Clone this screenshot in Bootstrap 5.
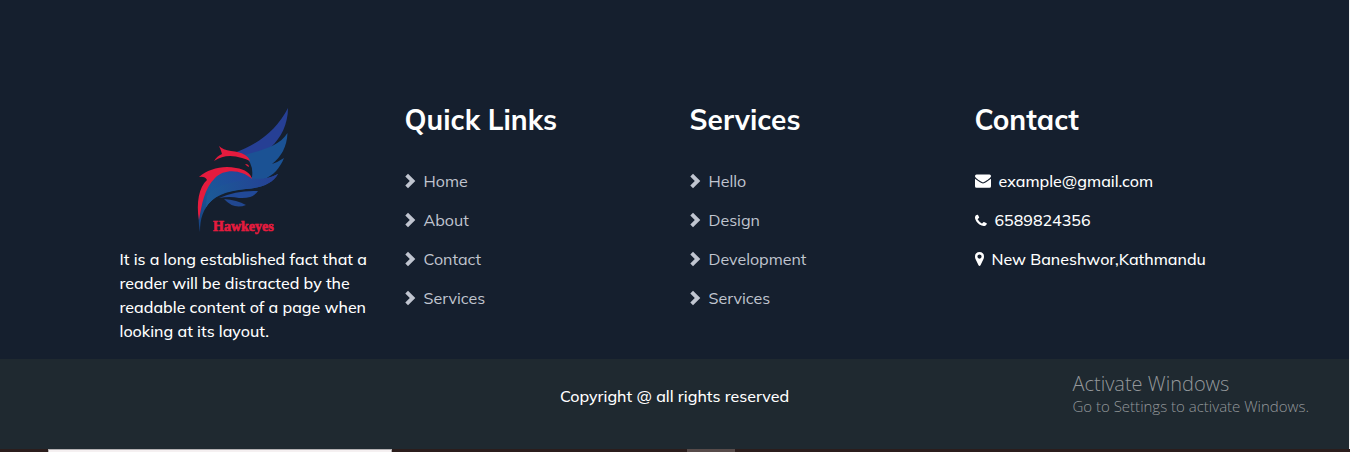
<!DOCTYPE html>
<html lang="en">
<head>
<meta charset="utf-8">
<meta name="viewport" content="width=device-width, initial-scale=1">
<title>Hawkeyes</title>
<link rel="stylesheet" href="https://cdn.jsdelivr.net/npm/bootstrap@5.3.0/dist/css/bootstrap.min.css">
<style>
  body { background: #151f2e; color: #fff; font-family: Mulish, Muli, Lato, "Liberation Sans", sans-serif; font-size: 16px; line-height: 24px; overflow-x: hidden; }
  .site-footer { border-right: 1px solid #f4f4f4; }
  .footer-main { padding-top: 103px; }
  .footer-main .container, .footer-main .row { --bs-gutter-x: 30px; }
  .footer-title { font-size: 28px; line-height: 34px; font-weight: 700; margin-bottom: 32px; }
  .footer-list li { margin-bottom: 15px; }
  .footer-list a { color: #c0c5d0; text-decoration: none; }
  .footer-list svg { fill: currentColor; flex: none; }
  .about-text, .contact-list, .copyright { font-weight: 500; }
  .brand-logo { width: 144px; height: 144px; }
  .brand-name { font: 700 14px "Liberation Serif", serif; fill: #e51b3e; stroke: #e51b3e; stroke-width: .6px; }
  .copyright { background: #1f2930; padding: 25px 0 41px; }
  .activation { position: absolute; top: 12px; right: 40px; color: #94989b; font-family: "Open Sans", sans-serif; font-weight: 300; font-size: 15px; line-height: 20px; }
  .activation strong { font-size: 20px; line-height: 25px; font-weight: 300; }
  .taskbar { height: 3px; background: #2b1d1c; }
  .task-search { width: 344px; margin-left: 48px; background: #f5f0f1; border: 1px solid #b4b1b3; border-bottom: 0; }
  .task-item { width: 48px; margin-left: 295px; background: #574b4a; }
</style>
</head>
<body>
<svg class="d-none" aria-hidden="true">
  <symbol id="chevron" viewBox="0 0 11 16"><path d="M3 .8 10.300 8 3 15.200 .3 12.500 4.800 8 .3 3.500Z"/></symbol>
</svg>
<footer class="site-footer">
  <div class="footer-main">
    <div class="container">
      <div class="row">
        <div class="col-12 col-sm-6 col-lg-3">
          <svg class="brand-logo d-block mx-auto" viewBox="175 103 144 144" role="img" aria-label="Hawkeyes">
            <defs>
              <linearGradient id="body" x1="0" y1="1" x2="1" y2="0"><stop offset="0" stop-color="#17417f"/><stop offset=".45" stop-color="#1a5798"/><stop offset="1" stop-color="#25449b"/></linearGradient>
              <linearGradient id="feather" x1="0" y1="0" x2="1" y2="0"><stop offset="0" stop-color="#1b5a97"/><stop offset="1" stop-color="#263f94"/></linearGradient>
            </defs>
            <path fill="#263f94" d="M234 153C257 145 277 130 288 108C288 124 281 138 271 147C264 153 257 156 251 161C247 155 241 153 234 153Z"/>
            <path fill="#1b5294" d="M244 155C258 151 279 147 287.500 133C287 147 281 157 272 164Q278 162 284 158C280 168 273 176 264 179Q271 178 278 174C272 184 260 188 246 189C226 191 212 196 205 209C209 190 222 182 238 180Q248 181 252 177Q254 164 244 155Z"/>
            <path fill="url(#body)" d="M200 232C197 214 199 191 208 181C220 168 241 168 251 178C246 188 224 187 211 201C203 209 200 219 200 232Z"/>
            <path fill="url(#feather)" d="M207 196C217 182 238 183 251 178C261 180 270 178 278 174C273 184 260 188 246 189C228 190 215 194 206 207Z"/>
            <path fill="#e51b3e" d="M199 177C208 169 223 165 236 168C245 169 251 174 252 179C242 170 225 168 215 178C204 189 202 204 199 220C196 203 199 187 207 180Q205 176 199 177Z"/>
            <path fill="#e51b3e" d="M219 146Q223 150 231 151C242 152 249 156 250 161Q246 159 242 158C232 155 223 155 214 161Q217 156 222 154Q221 150 219 146Z"/>
            <path fill="#e51b3e" d="M245 164Q249 164 249 167L247 166Z"/>
            <path fill="#214998" d="M219 198Q237 190 258 191Q253 199 239 198Q230 196 219 198Z"/>
            <path fill="#214790" d="M224 199Q237 200 246 205Q234 210 224 199Z"/>
            <text class="brand-name" x="213" y="231">Hawkeyes</text>
          </svg>
          <p class="about-text mb-3">It is a long established fact that a reader will be distracted by the readable content of a page when looking at its layout.</p>
        </div>
        <div class="col-12 col-sm-6 col-lg-3">
          <h3 class="footer-title">Quick Links</h3>
          <ul class="footer-list list-unstyled mb-0">
            <li><a class="d-flex align-items-center gap-2" href="#"><svg width="11" height="16"><use href="#chevron"/></svg>Home</a></li>
            <li><a class="d-flex align-items-center gap-2" href="#"><svg width="11" height="16"><use href="#chevron"/></svg>About</a></li>
            <li><a class="d-flex align-items-center gap-2" href="#"><svg width="11" height="16"><use href="#chevron"/></svg>Contact</a></li>
            <li><a class="d-flex align-items-center gap-2" href="#"><svg width="11" height="16"><use href="#chevron"/></svg>Services</a></li>
          </ul>
        </div>
        <div class="col-12 col-sm-6 col-lg-3">
          <h3 class="footer-title">Services</h3>
          <ul class="footer-list list-unstyled mb-0">
            <li><a class="d-flex align-items-center gap-2" href="#"><svg width="11" height="16"><use href="#chevron"/></svg>Hello</a></li>
            <li><a class="d-flex align-items-center gap-2" href="#"><svg width="11" height="16"><use href="#chevron"/></svg>Design</a></li>
            <li><a class="d-flex align-items-center gap-2" href="#"><svg width="11" height="16"><use href="#chevron"/></svg>Development</a></li>
            <li><a class="d-flex align-items-center gap-2" href="#"><svg width="11" height="16"><use href="#chevron"/></svg>Services</a></li>
          </ul>
        </div>
        <div class="col-12 col-sm-6 col-lg-3">
          <h3 class="footer-title">Contact</h3>
          <ul class="footer-list contact-list list-unstyled mb-0">
            <li class="d-flex align-items-center gap-2"><svg width="16" height="14" viewBox="0 0 16 14"><path d="M1.500.5H14.500Q16 .5 16 2C16 3.500 14.500 4.500 10 7.600Q8 9.200 6 7.600C1.500 4.500 0 3.500 0 2Q0 .5 1.500.5ZM0 4.700Q1 5.600 5 8.300Q8 10.600 11 8.300Q15 5.600 16 4.700V12.200Q16 13.700 14.500 13.700H1.500Q0 13.700 0 12.200Z"/></svg>example@gmail.com</li>
            <li class="d-flex align-items-center gap-2"><svg width="12" height="13" viewBox="0 0 13 14"><path d="M12.700 10.100Q13 11.800 11.200 12.600Q9.500 13.500 7.200 12.500C3.700 11.100 1.600 8.700.6 6.200Q-.8 3 1 1.200Q2.100.5 3 .7Q3.400 1 4.500 3.600Q4.600 4.100 3.500 4.900Q2.700 5.500 3 6Q4.600 8.700 7.400 10.200Q7.900 10.500 8.500 9.500Q9.200 8.400 9.700 8.600Z"/></svg>6589824356</li>
            <li class="d-flex align-items-center gap-2"><svg width="9" height="14" viewBox="0 0 9 14"><path fill-rule="evenodd" d="M4.500 0Q9 .3 9 4.500Q9 6 8.500 7L5.500 13.300Q4.500 14.600 3.500 13.300L.5 7Q0 6 0 4.500Q0 .3 4.500 0ZM4.500 2.500A2.100 2.100 0 1 0 4.500 6.700A2.100 2.100 0 1 0 4.500 2.500Z"/></svg>New Baneshwor,Kathmandu</li>
          </ul>
        </div>
      </div>
    </div>
  </div>
  <div class="copyright position-relative text-center">
    Copyright @ all rights reserved
    <div class="activation text-start d-none d-lg-block"><strong class="d-block">Activate Windows</strong>Go to Settings to activate Windows.</div>
  </div>
</footer>
<div class="taskbar d-flex"><div class="task-search"></div><div class="task-item"></div></div>
<script src="https://cdn.jsdelivr.net/npm/bootstrap@5.3.0/dist/js/bootstrap.bundle.min.js"></script>
</body>
</html>
